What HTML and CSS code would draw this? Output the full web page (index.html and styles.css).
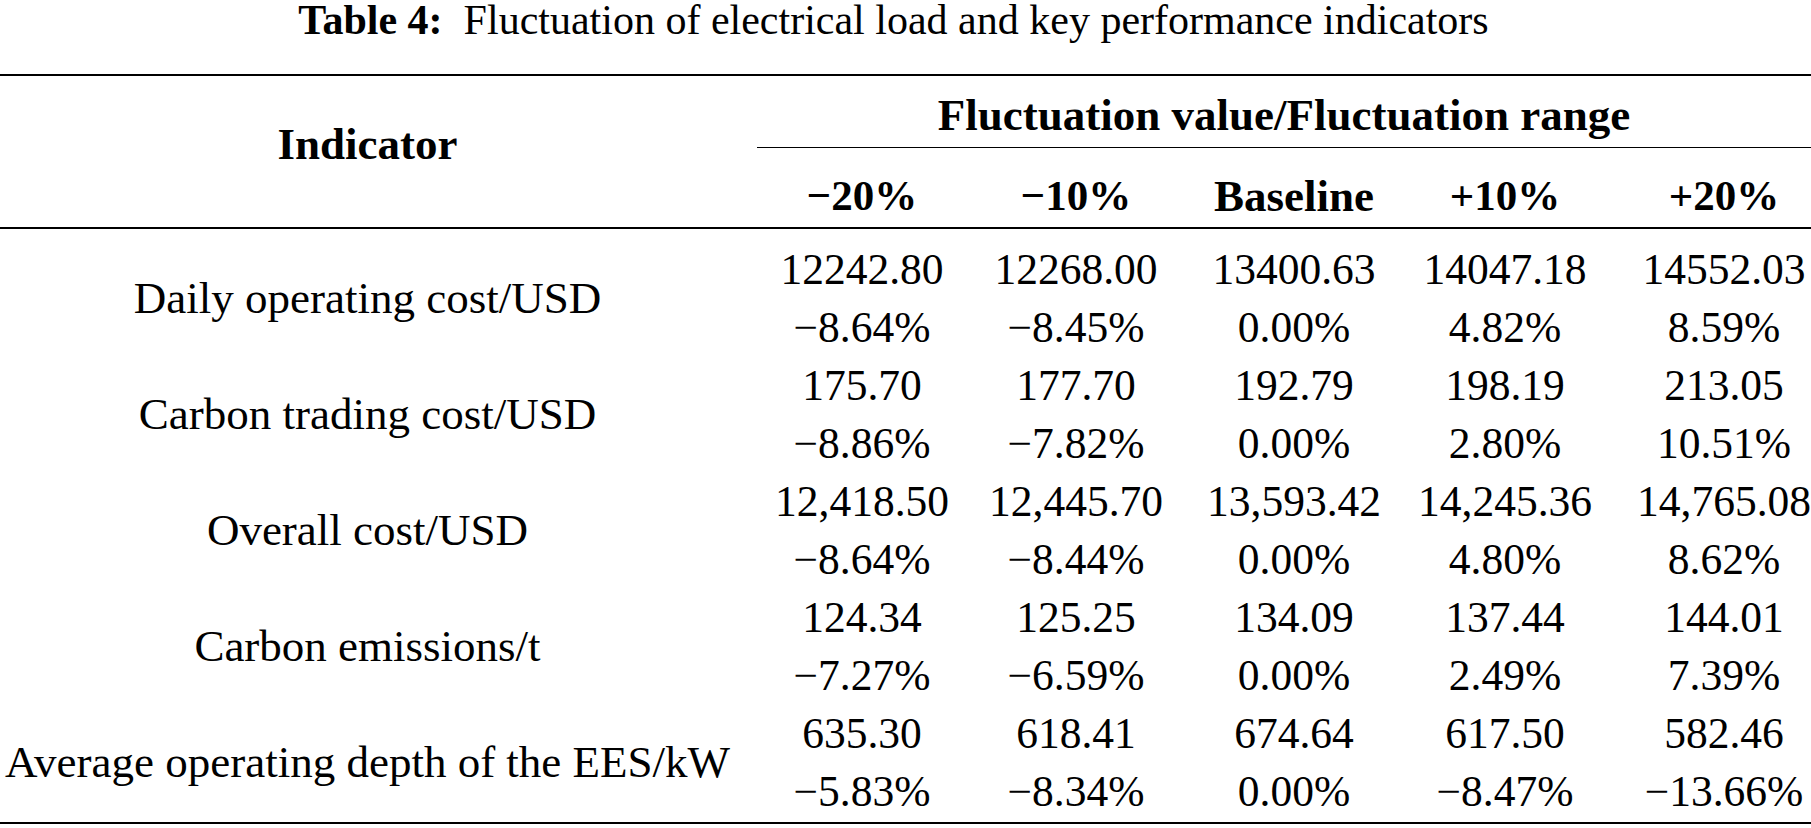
FILE: index.html
```html
<!DOCTYPE html>
<html lang="en">
<head>
<meta charset="utf-8">
<title>Table 4</title>
<link rel="stylesheet" href="styles.css">
</head>
<body>
<div class="page">
  <p class="caption"><b>Table 4:</b>&nbsp; Fluctuation of electrical load and key performance indicators</p>
  <table class="data">
    <colgroup>
      <col class="c-ind">
      <col class="c-1">
      <col class="c-2">
      <col class="c-3">
      <col class="c-4">
      <col class="c-5">
    </colgroup>
    <thead>
      <tr class="h-group">
        <th rowspan="2" class="ind">Indicator</th>
        <th colspan="5" class="group">Fluctuation value/Fluctuation range</th>
      </tr>
      <tr class="h-cols">
        <th>−20%</th>
        <th>−10%</th>
        <th class="word">Baseline</th>
        <th>+10%</th>
        <th class="last">+20%</th>
      </tr>
    </thead>
    <tbody>
      <tr class="first">
        <td rowspan="2" class="ind">Daily operating cost/USD</td>
        <td>12242.80</td><td>12268.00</td><td>13400.63</td><td>14047.18</td><td class="last">14552.03</td>
      </tr>
      <tr>
        <td>−8.64%</td><td>−8.45%</td><td>0.00%</td><td>4.82%</td><td class="last">8.59%</td>
      </tr>
      <tr>
        <td rowspan="2" class="ind">Carbon trading cost/USD</td>
        <td>175.70</td><td>177.70</td><td>192.79</td><td>198.19</td><td class="last">213.05</td>
      </tr>
      <tr>
        <td>−8.86%</td><td>−7.82%</td><td>0.00%</td><td>2.80%</td><td class="last">10.51%</td>
      </tr>
      <tr>
        <td rowspan="2" class="ind">Overall cost/USD</td>
        <td>12,418.50</td><td>12,445.70</td><td>13,593.42</td><td>14,245.36</td><td class="last">14,765.08</td>
      </tr>
      <tr>
        <td>−8.64%</td><td>−8.44%</td><td>0.00%</td><td>4.80%</td><td class="last">8.62%</td>
      </tr>
      <tr>
        <td rowspan="2" class="ind">Carbon emissions/t</td>
        <td>124.34</td><td>125.25</td><td>134.09</td><td>137.44</td><td class="last">144.01</td>
      </tr>
      <tr>
        <td>−7.27%</td><td>−6.59%</td><td>0.00%</td><td>2.49%</td><td class="last">7.39%</td>
      </tr>
      <tr>
        <td rowspan="2" class="ind ind-last">Average operating depth of the EES/kW</td>
        <td>635.30</td><td>618.41</td><td>674.64</td><td>617.50</td><td class="last">582.46</td>
      </tr>
      <tr class="final">
        <td>−5.83%</td><td>−8.34%</td><td>0.00%</td><td>−8.47%</td><td class="last">−13.66%</td>
      </tr>
    </tbody>
  </table>
</div>
</body>
</html>
```

FILE: styles.css
```css
html, body {
  margin: 0;
  padding: 0;
  background: #ffffff;
}

body {
  font-family: "Liberation Serif", "Times New Roman", serif;
  color: #000000;
  font-size: 43.5px;
}

.page {
  width: 1811px;
}

.caption {
  margin: 0 0 34px 0;
  padding-right: 24px;
  height: 40px;
  line-height: 40px;
  font-size: 42px;
  text-align: center;
  white-space: nowrap;
}

.caption b {
  font-weight: 700;
}

.data {
  width: 1811px;
  border-collapse: collapse;
  table-layout: fixed;
  border-top: 2px solid #000;
  border-bottom: 2px solid #000;
}

.c-ind { width: 757px; }
.c-1 { width: 210px; }
.c-2 { width: 218px; }
.c-3 { width: 218px; }
.c-4 { width: 204px; }
.c-5 { width: 204px; }

.data th,
.data td {
  padding: 0;
  line-height: 58px;
  text-align: center;
  vertical-align: middle;
  white-space: nowrap;
}

.data th {
  font-weight: 700;
  font-size: 43px;
}

.data th.ind,
.data td.ind {
  padding-right: 22px;
  font-size: 45px;
}

.data th.ind {
  padding-bottom: 16px;
}

.data th.group,
.data th.word {
  font-size: 45px;
}

.data .last {
  padding-left: 30px;
}

.h-group th.group {
  padding-top: 10px;
  padding-bottom: 3px;
  border-bottom: 1.5px solid #000;
}

.h-cols th {
  padding-top: 19px;
  padding-bottom: 2px;
}

.data thead tr.h-cols {
  border-bottom: 2px solid #000;
}

tr.first td {
  padding-top: 11px;
}

tr.final td,
td.ind-last {
  padding-bottom: 2px;
}
```
